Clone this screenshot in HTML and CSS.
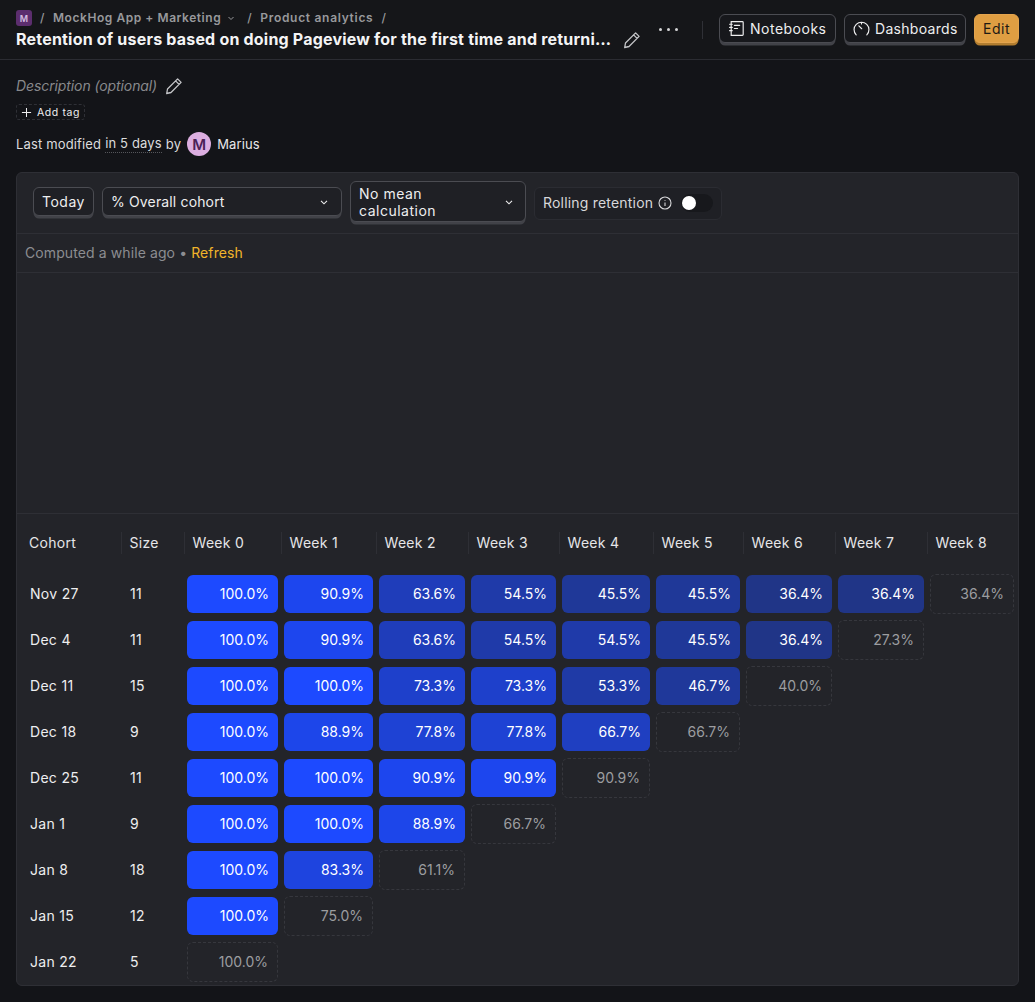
FILE: index.html
```html
<!DOCTYPE html>
<html lang="en">
<head>
<meta charset="UTF-8">
<meta name="viewport" content="width=device-width, initial-scale=1.0">
<title>Retention of users</title>
<link rel="stylesheet" href="styles.css">
</head>
<body>
    <header class="top-bar">
        <div class="title-area">
            <div class="crumbs">
                <span class="project-icon">M</span>
                <span class="slash">/</span>
                <span class="crumb">MockHog App + Marketing</span>
                <svg class="crumb-chevron" viewBox="0 0 10 10"><path d="M2.500 4l2.500 2.500L7.500 4"/></svg>
                <span class="slash slash-wide">/</span>
                <span class="crumb crumb-section">Product analytics</span>
                <span class="slash">/</span>
            </div>
            <div class="title-row">
                <h1 class="title">Retention of users based on doing Pageview for the first time and returning for Pageview</h1>
                <svg class="pencil title-pencil" viewBox="0 0 20 20"><path d="M13.600 2.900l3.500 3.500L7 16.500l-4.300 1 .8-4.500zM11.600 4.900l3.500 3.500"/></svg>
            </div>
        </div>
        <div class="more-dots"><i></i><i></i><i></i></div>
        <div class="top-sep"></div>
        <button class="btn btn-icon btn-notebooks" type="button">
            <svg class="btn-svg" viewBox="0 0 16 16"><path d="M3 1.500h10.500a.8.8 0 0 1 .8.8v11.400a.8.8 0 0 1-.8.8H3zM1.500 4h2.500M1.500 7h2.500M1.500 10h2.500M6 5h5M6 8h3"/></svg>
            Notebooks
        </button>
        <button class="btn btn-icon btn-dashboards" type="button">
            <svg class="btn-svg" viewBox="0 0 16 16"><path d="M3 14A7 7 0 1 1 13 14M8 3v.8M5.500 5.500l2.700 2.700"/></svg>
            Dashboards
        </button>
        <button class="btn btn-edit" type="button">Edit</button>
    </header>

    <main class="page">
        <div class="description">
            <em>Description (optional)</em>
            <svg class="pencil" viewBox="0 0 20 20"><path d="M13.600 2.900l3.500 3.500L7 16.500l-4.300 1 .8-4.500zM11.600 4.900l3.500 3.500"/></svg>
        </div>
        <div class="add-tag">
            <svg viewBox="0 0 12 12"><path d="M6 1v10M1 6h10"/></svg>
            Add tag
        </div>
        <div class="modified">
            Last modified <span class="dotted">in 5 days</span> by
            <span class="avatar">M</span>
            <span class="user-name">Marius</span>
        </div>

        <section class="card">
            <div class="toolbar">
                <button class="btn btn-today" type="button">Today</button>
                <button class="btn btn-select select-cohort" type="button">
                    % Overall cohort
                    <svg class="chevron" viewBox="0 0 10 10"><path d="M2 3.800L5 6.800l3-3"/></svg>
                </button>
                <button class="btn btn-select select-mean" type="button">
                    <span>No mean calculation</span>
                    <svg class="chevron" viewBox="0 0 10 10"><path d="M2 3.800L5 6.800l3-3"/></svg>
                </button>
                <div class="rolling">
                    <span class="rolling-label">Rolling retention</span>
                    <svg class="info" viewBox="0 0 14 14"><circle cx="7" cy="7" r="6"/><path d="M7 6.500v3.500M7 4v.8"/></svg>
                    <span class="switch"><span class="knob"></span></span>
                </div>
            </div>
            <div class="computed">Computed a while ago <span class="bullet">•</span> <a class="refresh" href="#">Refresh</a></div>
            <div class="chart"></div>

            <table class="retention">
                <colgroup>
                    <col class="col-cohort"><col class="col-size">
                    <col class="w97"><col class="w95"><col class="w92"><col class="w91"><col class="w94"><col class="w90"><col class="w92"><col class="w92"><col class="w90">
                </colgroup>
                <thead>
                    <tr>
                        <th>Cohort</th><th>Size</th><th>Week 0</th><th>Week 1</th><th>Week 2</th><th>Week 3</th><th>Week 4</th><th>Week 5</th><th>Week 6</th><th>Week 7</th><th>Week 8</th>
                    </tr>
                </thead>
                <tbody>
                    <tr>
                        <td class="label">Nov 27</td><td class="label">11</td>
                        <td><div class="val" style="background:rgba(29,74,255,1)">100.0%</div></td>
                        <td><div class="val" style="background:rgba(29,74,255,.92)">90.9%</div></td>
                        <td><div class="val" style="background:rgba(29,74,255,.68)">63.6%</div></td>
                        <td><div class="val" style="background:rgba(29,74,255,.6)">54.5%</div></td>
                        <td><div class="val" style="background:rgba(29,74,255,.52)">45.5%</div></td>
                        <td><div class="val" style="background:rgba(29,74,255,.52)">45.5%</div></td>
                        <td><div class="val" style="background:rgba(29,74,255,.44)">36.4%</div></td>
                        <td><div class="val" style="background:rgba(29,74,255,.44)">36.4%</div></td>
                        <td><div class="val pending">36.4%</div></td>
                    </tr>
                    <tr>
                        <td class="label">Dec 4</td><td class="label">11</td>
                        <td><div class="val" style="background:rgba(29,74,255,1)">100.0%</div></td>
                        <td><div class="val" style="background:rgba(29,74,255,.92)">90.9%</div></td>
                        <td><div class="val" style="background:rgba(29,74,255,.68)">63.6%</div></td>
                        <td><div class="val" style="background:rgba(29,74,255,.6)">54.5%</div></td>
                        <td><div class="val" style="background:rgba(29,74,255,.6)">54.5%</div></td>
                        <td><div class="val" style="background:rgba(29,74,255,.52)">45.5%</div></td>
                        <td><div class="val" style="background:rgba(29,74,255,.44)">36.4%</div></td>
                        <td><div class="val pending">27.3%</div></td>
                    </tr>
                    <tr>
                        <td class="label">Dec 11</td><td class="label">15</td>
                        <td><div class="val" style="background:rgba(29,74,255,1)">100.0%</div></td>
                        <td><div class="val" style="background:rgba(29,74,255,1)">100.0%</div></td>
                        <td><div class="val" style="background:rgba(29,74,255,.76)">73.3%</div></td>
                        <td><div class="val" style="background:rgba(29,74,255,.76)">73.3%</div></td>
                        <td><div class="val" style="background:rgba(29,74,255,.59)">53.3%</div></td>
                        <td><div class="val" style="background:rgba(29,74,255,.53)">46.7%</div></td>
                        <td><div class="val pending">40.0%</div></td>
                    </tr>
                    <tr>
                        <td class="label">Dec 18</td><td class="label">9</td>
                        <td><div class="val" style="background:rgba(29,74,255,1)">100.0%</div></td>
                        <td><div class="val" style="background:rgba(29,74,255,.9)">88.9%</div></td>
                        <td><div class="val" style="background:rgba(29,74,255,.8)">77.8%</div></td>
                        <td><div class="val" style="background:rgba(29,74,255,.8)">77.8%</div></td>
                        <td><div class="val" style="background:rgba(29,74,255,.71)">66.7%</div></td>
                        <td><div class="val pending">66.7%</div></td>
                    </tr>
                    <tr>
                        <td class="label">Dec 25</td><td class="label">11</td>
                        <td><div class="val" style="background:rgba(29,74,255,1)">100.0%</div></td>
                        <td><div class="val" style="background:rgba(29,74,255,1)">100.0%</div></td>
                        <td><div class="val" style="background:rgba(29,74,255,.92)">90.9%</div></td>
                        <td><div class="val" style="background:rgba(29,74,255,.92)">90.9%</div></td>
                        <td><div class="val pending">90.9%</div></td>
                    </tr>
                    <tr>
                        <td class="label">Jan 1</td><td class="label">9</td>
                        <td><div class="val" style="background:rgba(29,74,255,1)">100.0%</div></td>
                        <td><div class="val" style="background:rgba(29,74,255,1)">100.0%</div></td>
                        <td><div class="val" style="background:rgba(29,74,255,.9)">88.9%</div></td>
                        <td><div class="val pending">66.7%</div></td>
                    </tr>
                    <tr>
                        <td class="label">Jan 8</td><td class="label">18</td>
                        <td><div class="val" style="background:rgba(29,74,255,1)">100.0%</div></td>
                        <td><div class="val" style="background:rgba(29,74,255,.85)">83.3%</div></td>
                        <td><div class="val pending">61.1%</div></td>
                    </tr>
                    <tr>
                        <td class="label">Jan 15</td><td class="label">12</td>
                        <td><div class="val" style="background:rgba(29,74,255,1)">100.0%</div></td>
                        <td><div class="val pending">75.0%</div></td>
                    </tr>
                    <tr>
                        <td class="label">Jan 22</td><td class="label">5</td>
                        <td><div class="val pending">100.0%</div></td>
                    </tr>
                </tbody>
            </table>
        </section>
    </main>
</body>
</html>
```

FILE: styles.css
```css
* {
    box-sizing: border-box;
}

body {
    margin: 0;
    background-color: #131418;
    color: #eeeeef;
    font-family: Inter, "Noto Sans", sans-serif;
    font-size: 14px;
    letter-spacing: 0.3px;
}

svg {
    fill: none;
    stroke: currentColor;
    flex-shrink: 0;
}

/* top bar */
.top-bar {
    display: flex;
    align-items: center;
    height: 60px;
    padding: 0 16px;
    background-color: #151619;
    border-bottom: 1px solid #2b2c32;
}

.title-area {
    flex: none;
    width: 626px;
}

.crumbs {
    display: flex;
    align-items: center;
    height: 16px;
    margin-top: 2px;
    font-size: 12px;
    font-weight: 600;
    letter-spacing: 0.55px;
    color: #98999c;
}

.project-icon {
    display: flex;
    align-items: center;
    justify-content: center;
    width: 16px;
    height: 16px;
    border-radius: 3px;
    background-color: #5c2e6e;
    color: #d6bfe0;
    font-size: 9px;
    letter-spacing: 0;
}

.crumb {
    margin-bottom: 2px;
}

.crumb-section {
    letter-spacing: 0.7px;
}

.slash {
    margin: 0 8px 2px;
    font-weight: 500;
}

.slash-wide {
    margin-left: 11px;
    margin-right: 8px;
}

.crumb-chevron {
    width: 10px;
    height: 10px;
    margin-left: 5px;
    stroke-width: 1;
}

.title-row {
    display: flex;
    align-items: center;
    margin-top: 1px;
}

.title {
    flex: 1;
    min-width: 0;
    margin: 0;
    overflow: hidden;
    white-space: nowrap;
    text-overflow: ellipsis;
    font-size: 16px;
    font-weight: 700;
    line-height: 24px;
    letter-spacing: 0.2px;
    color: #f4f4f5;
}

.pencil {
    width: 20px;
    height: 20px;
    stroke-width: 1.300;
    stroke-linejoin: round;
    color: #c4c5c8;
}

.title-pencil {
    margin-left: 10px;
    margin-top: 1px;
}

.more-dots {
    display: flex;
    flex: none;
    gap: 5px;
    margin-left: 17px;
}

.more-dots i {
    width: 3px;
    height: 3px;
    border-radius: 50%;
    background-color: #d5d5d7;
}

.top-sep {
    flex: none;
    width: 1px;
    height: 18px;
    margin: 0 16px 0 24px;
    background-color: #2f3036;
}

/* buttons, the lip underneath gives the raised look */
.btn {
    display: flex;
    flex: none;
    align-items: center;
    height: 29px;
    margin-bottom: 3px;
    padding: 0 8px;
    border: 1px solid #4b4c52;
    border-radius: 6px;
    background-color: #1f2025;
    box-shadow: 0 3px 0 -0.5px #414248;
    color: #eeeeef;
    font-family: inherit;
    font-size: 14px;
    font-weight: 400;
    letter-spacing: 0.5px;
}

.btn-icon {
    margin-right: 8px;
    gap: 5px;
    background-color: #17181c;
}

.btn-notebooks {
    width: 117px;
}

.btn-dashboards {
    width: 122px;
    letter-spacing: 0.3px;
}

.btn-svg {
    width: 17px;
    height: 17px;
    stroke-width: 1.100;
    stroke-linecap: round;
}

.btn-edit {
    width: 45px;
    background-color: #df9e42;
    border-color: #e3a44e;
    box-shadow: 0 3px 0 -0.5px #b27d2f;
    color: #1d1a14;
}

.btn-today {
    width: 61px;
}

.btn-select {
    justify-content: space-between;
    text-align: left;
    background-color: #1f2025;
}

.chevron {
    width: 10px;
    height: 10px;
    stroke-width: 1.100;
}

/* meta under the header */
.page {
    padding: 16px;
}

.description {
    display: flex;
    align-items: center;
    gap: 7px;
    height: 20px;
    letter-spacing: -0.1px;
    color: #88898c;
}

.description em {
    margin-bottom: 2px;
}

.add-tag {
    display: flex;
    align-items: center;
    gap: 5px;
    width: fit-content;
    height: 16px;
    margin-top: 8px;
    padding: 0 4px;
    border: 1px dashed #2f3036;
    border-radius: 3px;
    font-size: 10.500px;
    font-weight: 400;
    letter-spacing: 0.6px;
}

.add-tag svg {
    width: 11px;
    height: 11px;
    stroke-width: 1.100;
}

.modified {
    display: flex;
    align-items: center;
    gap: 4px;
    height: 24px;
    margin-top: 12px;
    font-size: 13px;
    letter-spacing: 0.15px;
    color: #dcdcde;
}

.dotted {
    border-bottom: 1px dotted #55565b;
    line-height: 17px;
}

.avatar {
    display: flex;
    align-items: center;
    justify-content: center;
    width: 24px;
    height: 24px;
    margin: 0 2px;
    border-radius: 50%;
    background-color: #dcaee0;
    color: #4a2156;
    font-size: 15px;
    font-weight: 600;
}

.user-name {
    color: #e8e8ea;
}

/* card */
.card {
    margin-top: 16px;
    background-color: #232429;
    border: 1px solid #2e2f35;
    border-radius: 6px;
    overflow: hidden;
}

.toolbar {
    display: flex;
    align-items: center;
    gap: 8px;
    height: 61px;
    padding: 0 16px;
    border-bottom: 1px solid #2e2f35;
}

.select-cohort {
    width: 240px;
    padding-right: 12px;
    letter-spacing: 0.15px;
}

.select-mean {
    width: 176px;
    height: 41px;
    padding-right: 11px;
    line-height: 17px;
    gap: 26px;
}

.rolling {
    display: flex;
    align-items: center;
    height: 33px;
    padding: 0 8px;
    border: 1px solid #2b2c32;
    border-radius: 6px;
    background-color: #1f2025;
    letter-spacing: 0.2px;
    color: #d8d8da;
}

.rolling-label {
    margin-bottom: 2px;
}

.info {
    width: 14px;
    height: 14px;
    margin-left: 5px;
    stroke-width: 1.100;
}

.switch {
    display: block;
    width: 32px;
    height: 18px;
    margin-left: 9px;
    padding: 1px 0 0 1px;
    border-radius: 9px;
    background-color: #17181c;
}

.knob {
    display: block;
    width: 14px;
    height: 14px;
    margin-top: 1px;
    border-radius: 50%;
    background-color: #ffffff;
}

.computed {
    height: 39px;
    padding-left: 8px;
    line-height: 38px;
    border-bottom: 1px solid #2e2f35;
    letter-spacing: 0.1px;
    color: #8c8d91;
}

.refresh {
    color: #f1b42a;
    text-decoration: none;
}

.chart {
    height: 241px;
    border-bottom: 1px solid #2e2f35;
}

/* retention table */
.retention {
    width: 1000px;
    border-collapse: collapse;
    table-layout: fixed;
}

.col-cohort { width: 104px; }
.col-size { width: 63px; }
.w97 { width: 97px; }
.w95 { width: 95px; }
.w94 { width: 94px; }
.w92 { width: 92px; }
.w91 { width: 91px; }
.w90 { width: 90px; }

.retention th {
    height: 57px;
    padding: 0 0 0 8.500px;
    text-align: left;
    font-weight: 400;
    color: #e6e6e8;
    position: relative;
}

.retention th:first-child {
    padding-left: 12px;
}

.retention th + th::before {
    content: "";
    position: absolute;
    left: 0;
    top: 18px;
    height: 22px;
    width: 1px;
    background-color: #2e2f35;
}

.retention td {
    height: 46px;
    padding: 3px;
    vertical-align: middle;
}

.retention td.label {
    padding: 0 0 2px 9px;
    color: #eeeeef;
}

.retention td.label:first-child {
    padding-left: 13px;
}

.val {
    height: 38px;
    padding-right: 9px;
    border-radius: 6px;
    text-align: right;
    line-height: 38px;
    letter-spacing: 0;
    color: #ffffff;
    font-weight: 400;
}

.pending {
    height: 40px;
    margin: -1px 0;
    border: 1px dashed #36373d;
    color: #9c9da0;
}
```
